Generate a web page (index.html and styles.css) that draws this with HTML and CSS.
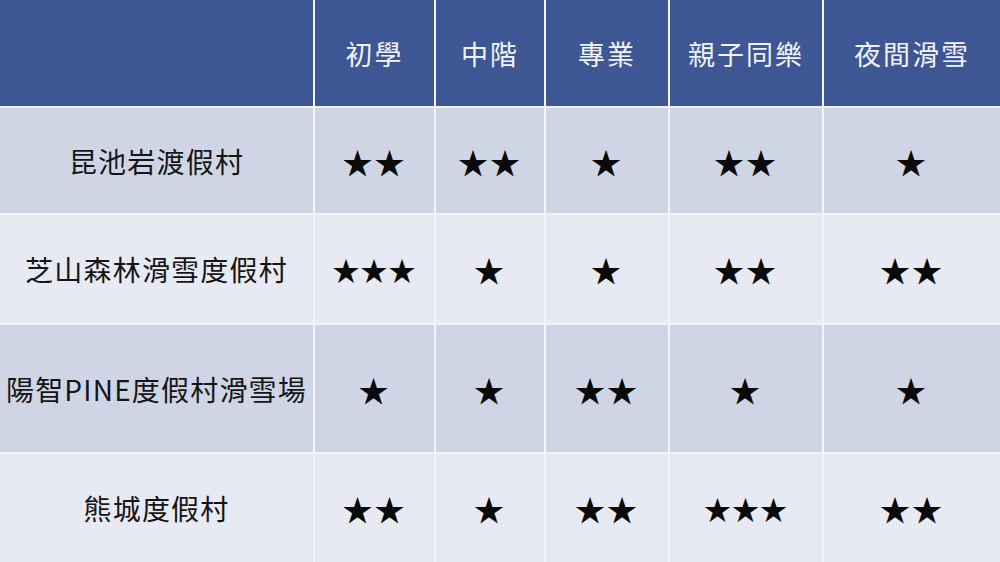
FILE: index.html
```html
<!DOCTYPE html>
<html lang="zh-Hant">
<head>
<meta charset="utf-8">
<link rel="stylesheet" href="styles.css">
</head>
<body>
<div class="table">
  <div class="cell head"></div>
  <div class="cell head">初學</div>
  <div class="cell head">中階</div>
  <div class="cell head">專業</div>
  <div class="cell head">親子同樂</div>
  <div class="cell head">夜間滑雪</div>

  <div class="cell odd name">昆池岩渡假村</div>
  <div class="cell odd star">★★</div>
  <div class="cell odd star">★★</div>
  <div class="cell odd star">★</div>
  <div class="cell odd star">★★</div>
  <div class="cell odd star">★</div>

  <div class="cell even name">芝山森林滑雪度假村</div>
  <div class="cell even star three">★★★</div>
  <div class="cell even star">★</div>
  <div class="cell even star">★</div>
  <div class="cell even star">★★</div>
  <div class="cell even star">★★</div>

  <div class="cell odd name">陽智PINE度假村滑雪場</div>
  <div class="cell odd star">★</div>
  <div class="cell odd star">★</div>
  <div class="cell odd star">★★</div>
  <div class="cell odd star">★</div>
  <div class="cell odd star">★</div>

  <div class="cell even name">熊城度假村</div>
  <div class="cell even star">★★</div>
  <div class="cell even star">★</div>
  <div class="cell even star">★★</div>
  <div class="cell even star three">★★★</div>
  <div class="cell even star">★★</div>
</div>
</body>
</html>
```
FILE: styles.css
```css
html, body {
  margin: 0;
  padding: 0;
  background: #ffffff;
}
.table {
  width: 1000px;
  height: 562px;
  display: grid;
  grid-template-columns: 313px 119px 108px 122px 152px 1fr;
  grid-template-rows: 106px 105px 108px 127px 1fr;
  column-gap: 2px;
  row-gap: 2px;
  background: #f4f5fa;
  font-family: "Noto Sans CJK TC", "Noto Sans", sans-serif;
}
.cell {
  display: flex;
  align-items: center;
  justify-content: center;
  white-space: nowrap;
}
.head {
  background: #3d5694;
  color: #f2f3f8;
  font-size: 27px;
  letter-spacing: 2px;
}
.odd {
  background: #d0d5e6;
}
.even {
  background: #e8eaf3;
}
.name {
  color: #151515;
  font-size: 28px;
  letter-spacing: 1.2px;
}
.star {
  color: #0a0a0a;
  font-size: 30px;
  letter-spacing: 2px;
}
.star.three {
  font-size: 27px;
  letter-spacing: 1px;
}
```
